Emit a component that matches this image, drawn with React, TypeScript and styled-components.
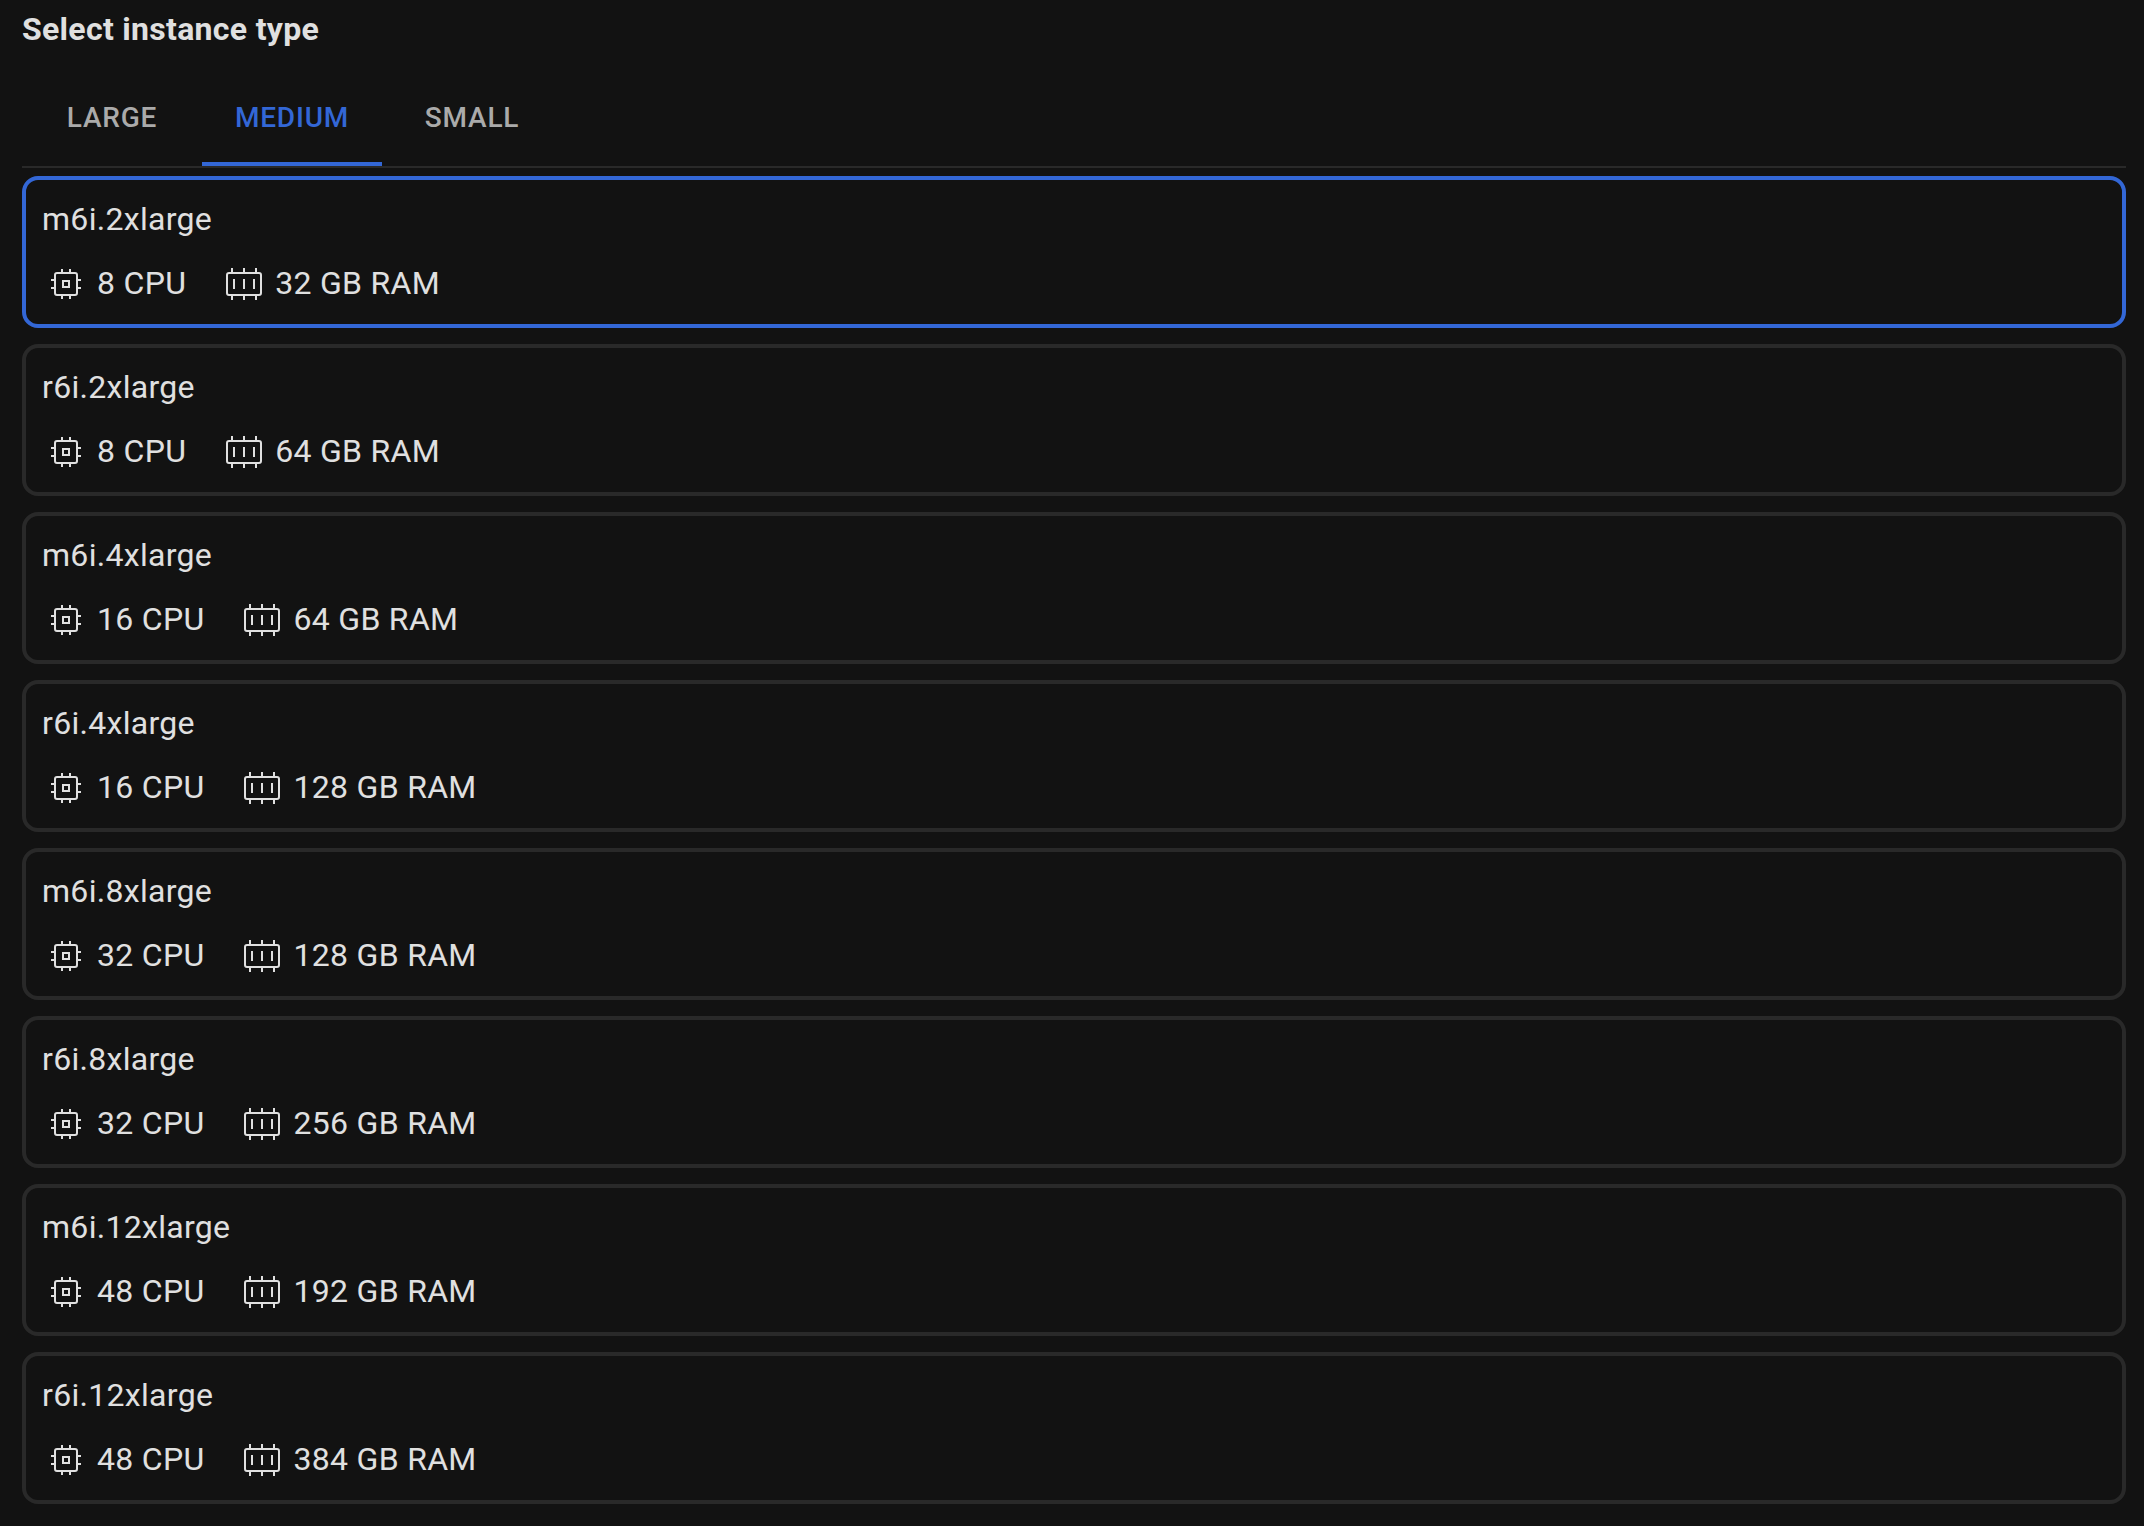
import React, { useState } from "react";
import styled, { createGlobalStyle } from "styled-components";

const GlobalStyle = createGlobalStyle`
  *, *::before, *::after { box-sizing: border-box; }
  html { background: #121212; }
  body {
    margin: 0;
    background: #121212;
    color: #e0e0e0;
    font-family: Roboto, "Liberation Sans", sans-serif;
    font-size: 32px;
    line-height: 46px;
    letter-spacing: 0.00938em;
  }
`;

const Page = styled.main`
  padding: 6px 18px 22px 22px;
`;

const Title = styled.h1`
  margin: 0 0 18px;
  font-size: 32px;
  font-weight: 700;
  line-height: 46px;
`;

const TabBar = styled.div`
  display: flex;
  margin-bottom: 8px;
  border-bottom: 2px solid #292929;
`;

const Tab = styled.button<{ $active: boolean }>`
  min-width: 180px;
  height: 96px;
  padding: 4px 32px 0;
  border: 0;
  border-bottom: 4px solid ${(p) => (p.$active ? "#3367d6" : "transparent")};
  background: none;
  color: ${(p) => (p.$active ? "#3367d6" : "#aaaaaa")};
  font-family: inherit;
  font-size: 28px;
  font-weight: 500;
  line-height: 36px;
  letter-spacing: 0.02857em;
  text-transform: uppercase;
  cursor: pointer;
`;

const CardList = styled.div`
  display: flex;
  flex-direction: column;
  gap: 16px;
`;

const Card = styled.label`
  display: flex;
  flex-direction: column;
  gap: 18px;
  padding: 16px;
  border: 4px solid #292929;
  border-radius: 16px;
  cursor: pointer;

  &:has(input:checked) {
    border-color: #3367d6;
  }
`;

const CardHead = styled.span`
  display: flex;
`;

const Radio = styled.input`
  appearance: none;
  width: 0;
  height: 0;
  margin: 0;
  outline: none;
`;

const Specs = styled.span`
  display: flex;
  gap: 34px;
`;

const Spec = styled.span`
  display: flex;
  align-items: flex-start;
  gap: 7px;
`;

const Icon = styled.svg`
  width: 48px;
  height: 48px;
  fill: none;
  stroke: currentColor;
  stroke-width: 2;
`;

const CpuIcon = () => (
  <Icon viewBox="0 0 48 48" aria-hidden="true">
    <rect x="13" y="13" width="22" height="22" rx="2" />
    <rect x="21" y="21" width="6" height="6" />
    <path d="M20 9v3M28 9v3M20 36v3M28 36v3M9 20h3M9 28h3M36 20h3M36 28h3" />
  </Icon>
);

const RamIcon = () => (
  <Icon viewBox="0 0 48 48" aria-hidden="true">
    <rect x="7" y="13" width="34" height="22" rx="2" />
    <path d="M14 19v10M24 19v10M34 19v10" />
    <path d="M12 8v4M24 8v4M36 8v4M12 36v4M24 36v4M36 36v4" />
  </Icon>
);

const sizes = ["Large", "Medium", "Small"];

const instances = [
  { name: "m6i.2xlarge", cpu: 8, ram: 32 },
  { name: "r6i.2xlarge", cpu: 8, ram: 64 },
  { name: "m6i.4xlarge", cpu: 16, ram: 64 },
  { name: "r6i.4xlarge", cpu: 16, ram: 128 },
  { name: "m6i.8xlarge", cpu: 32, ram: 128 },
  { name: "r6i.8xlarge", cpu: 32, ram: 256 },
  { name: "m6i.12xlarge", cpu: 48, ram: 192 },
  { name: "r6i.12xlarge", cpu: 48, ram: 384 },
];

export default function App() {
  const [size, setSize] = useState("Medium");
  const [selected, setSelected] = useState("m6i.2xlarge");

  return (
    <>
      <GlobalStyle />
      <Page>
        <Title id="instance-title">Select instance type</Title>
        <TabBar role="tablist" aria-labelledby="instance-title">
          {sizes.map((s) => (
            <Tab
              key={s}
              type="button"
              role="tab"
              aria-selected={s === size}
              $active={s === size}
              onClick={() => setSize(s)}
            >
              {s}
            </Tab>
          ))}
        </TabBar>
        <CardList role="radiogroup" aria-labelledby="instance-title">
          {instances.map(({ name, cpu, ram }) => (
            <Card key={name}>
              <CardHead>
                <Radio
                  type="radio"
                  name="instance"
                  value={name}
                  checked={selected === name}
                  onChange={() => setSelected(name)}
                />
                {name}
              </CardHead>
              <Specs>
                <Spec>
                  <CpuIcon />
                  <span>{cpu} CPU</span>
                </Spec>
                <Spec>
                  <RamIcon />
                  <span>{ram} GB RAM</span>
                </Spec>
              </Specs>
            </Card>
          ))}
        </CardList>
      </Page>
    </>
  );
}
